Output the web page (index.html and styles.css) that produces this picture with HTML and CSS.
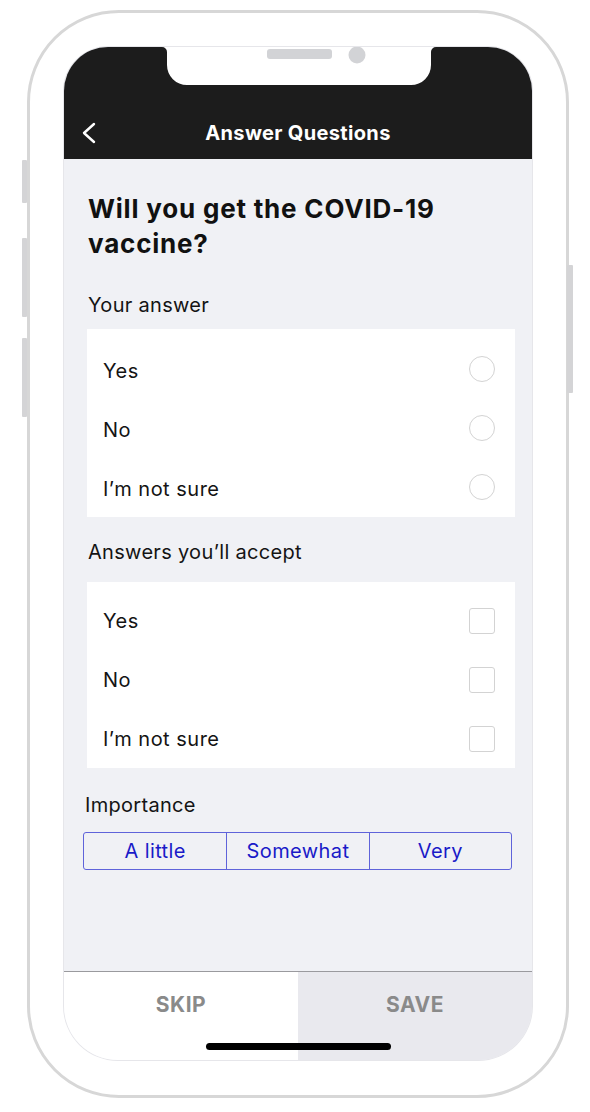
FILE: index.html
```html
<!DOCTYPE html>
<html lang="en">
<head>
    <meta charset="UTF-8">
    <meta name="viewport" content="width=device-width, initial-scale=1.0">
    <title>Answer Questions</title>
    <link rel="stylesheet" href="styles.css">
</head>
<body>

<div class="phone">
    <!-- hardware buttons -->
    <span class="side-btn mute"></span>
    <span class="side-btn vol-up"></span>
    <span class="side-btn vol-down"></span>
    <span class="side-btn power"></span>

    <div class="screen">
        <svg class="notch" width="274" height="38" viewBox="0 0 274 38">
            <path d="M0,0 A5,5 0 0 1 5,5 V18 A20,20 0 0 0 25,38 H249 A20,20 0 0 0 269,18 V5 A5,5 0 0 1 274,0 Z" fill="#fff"/>
            <rect x="105" y="2" width="65" height="10" rx="3" fill="#d2d3d6"/>
            <circle cx="195" cy="8" r="8.5" fill="#d2d3d6"/>
        </svg>

        <div class="nav">
            <div class="nav-back">
                <svg width="16" height="24" viewBox="0 0 16 24">
                    <path d="M13,3 L3,12 L13,21" fill="none" stroke="#fff" stroke-width="2.4" stroke-linecap="round" stroke-linejoin="round"/>
                </svg>
            </div>
            <div class="nav-title">Answer Questions</div>
            <div></div>
        </div>

        <div class="content">
            <h1 class="question">Will you get the COVID-19 vaccine?</h1>

            <div class="section-label first">Your answer</div>
            <div class="card radios">
                <div class="row"><span>Yes</span><span class="radio"></span></div>
                <div class="row"><span>No</span><span class="radio"></span></div>
                <div class="row"><span>I’m not sure</span><span class="radio"></span></div>
            </div>

            <div class="section-label second">Answers you’ll accept</div>
            <div class="card checks">
                <div class="row"><span>Yes</span><span class="check"></span></div>
                <div class="row"><span>No</span><span class="check"></span></div>
                <div class="row"><span>I’m not sure</span><span class="check"></span></div>
            </div>

            <div class="section-label importance">Importance</div>
            <div class="segments">
                <div class="segment">A little</div>
                <div class="segment">Somewhat</div>
                <div class="segment">Very</div>
            </div>
        </div>

        <div class="footer">
            <div class="footer-btn skip">SKIP</div>
            <div class="footer-btn save">SAVE</div>
            <span class="home-bar"></span>
        </div>
    </div>
</div>

</body>
</html>
```

FILE: styles.css
```css
body {
    margin: 0;
    background: #fff;
    font-family: Inter, "Noto Sans", sans-serif;
    color: #141414;
}

.phone {
    position: relative;
    box-sizing: border-box;
    width: 542px;
    height: 1088px;
    margin: 10px 0 0 27px;
    padding: 34px 0 0 34px;
    border: 3px solid #d7d7d7;
    border-radius: 92px;
    background: #fff;
}

.side-btn {
    position: absolute;
    width: 5px;
    background: #d4d4d6;
    border-radius: 1px;
}

.mute { left: -8px; top: 147px; height: 43px; }
.vol-up { left: -8px; top: 225px; height: 79px; }
.vol-down { left: -8px; top: 325px; height: 79px; }
.power { left: 537px; top: 252px; height: 128px; width: 6px; }

.screen {
    position: relative;
    display: flex;
    flex-direction: column;
    box-sizing: border-box;
    width: 468px;
    height: 1013px;
    border-radius: 44px 44px 54px 54px;
    overflow: hidden;
    background: #f0f1f5;
    box-shadow: 0 0 0 1px #e6e6ea;
}

.notch {
    position: absolute;
    top: 0;
    left: 98px;
}

.nav {
    display: grid;
    grid-template-columns: 1fr auto 1fr;
    align-items: center;
    height: 112px;
    padding-top: 60px;
    box-sizing: border-box;
    background: #1c1c1c;
}

.nav-back {
    display: flex;
    padding-left: 17px;
}

.nav-title {
    color: #fff;
    font-size: 20px;
    font-weight: 700;
    line-height: 40px;
    letter-spacing: 0.35px;
}

.content {
    flex: 1;
    padding: 0 17px 0 23px;
}

.question {
    margin: 32px 0 0 1px;
    font-size: 26px;
    font-weight: 700;
    line-height: 35px;
    letter-spacing: 0.8px;
    color: #111;
}

.section-label {
    margin-left: 1px;
    font-size: 20px;
    line-height: 24px;
    letter-spacing: 0.3px;
}

.section-label.first { margin-top: 32px; }
.section-label.second { margin-top: 23px; }
.section-label.importance { margin-top: 25px; margin-left: -2px; }

.card {
    background: #fff;
}

.radios {
    margin-top: 12px;
    padding: 10px 0 1px;
}

.checks {
    margin-top: 18px;
    padding: 9px 0 0;
}

.row {
    display: flex;
    justify-content: space-between;
    align-items: center;
    height: 59px;
    padding: 0 20px 0 16px;
    font-size: 20px;
    letter-spacing: 0.5px;
}

.radios .row span:first-child {
    padding-top: 5px;
}

.radio {
    width: 24px;
    height: 24px;
    border: 1px solid #d3d3d3;
    border-radius: 50%;
}

.check {
    width: 24px;
    height: 24px;
    border: 1px solid #d3d3d3;
    border-radius: 3px;
}

.segments {
    display: grid;
    grid-template-columns: 1fr 1fr 1fr;
    height: 38px;
    margin: 15px 3px 0 -4px;
    border: 1px solid #5f63da;
    border-radius: 3px;
    box-sizing: border-box;
}

.segment {
    display: flex;
    align-items: center;
    justify-content: center;
    color: #1a1ac8;
    font-size: 20px;
    letter-spacing: 0.4px;
}

.segment + .segment {
    border-left: 1px solid #5f63da;
}

.footer {
    position: relative;
    display: flex;
    height: 89px;
    border-top: 1px solid #9a9a9e;
    box-sizing: border-box;
}

.footer-btn {
    flex: 1;
    padding-top: 20px;
    text-align: center;
    font-size: 21px;
    font-weight: 700;
    line-height: 26px;
    letter-spacing: 0.5px;
    color: #8a8a8a;
}

.skip { background: #fff; }
.save { background: #e9e9ee; }

.home-bar {
    position: absolute;
    left: 142px;
    bottom: 10px;
    width: 185px;
    height: 7px;
    border-radius: 4px;
    background: #000;
}
```
